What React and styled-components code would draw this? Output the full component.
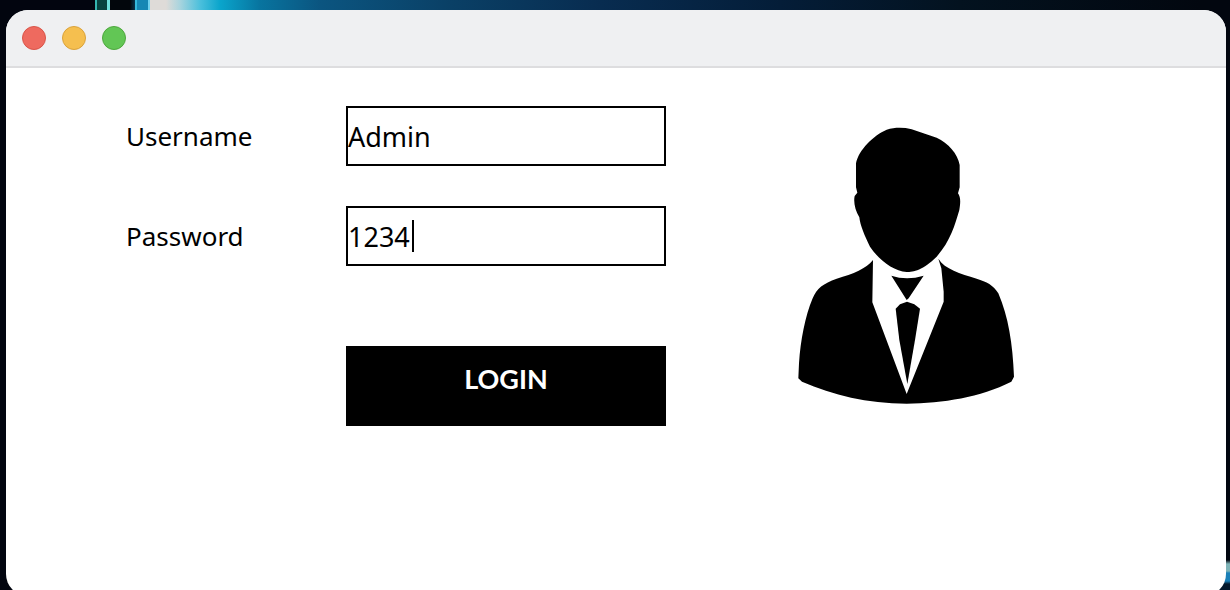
import React, { useState } from 'react';
import styled, { createGlobalStyle } from 'styled-components';

const GlobalStyle = createGlobalStyle`
  * { box-sizing: border-box; }
  body { margin: 0; background: #02060f; }
`;

const Desktop = styled.div`
  display: flex;
  height: 100vh;
  overflow: hidden;
  padding: 10px 4px 0 6px;
  background:
    linear-gradient(180deg, #02060f 0 560px, #7fb4b8 564px 571px, #1b80b8 573px 581px, #04182c 584px) right top / 20px 100% no-repeat,
    linear-gradient(90deg,
      #02050f 0 95px, #35b5b0 95px 97px, #06433f 97px 107px, #6fe0dc 107px 110px,
      #02060c 110px 130px, #08324a 135px, #35b8dc 135px 137px, #1687b4 137px 148px,
      #6fd0ee 148px 150px, #dedbd8 150px 166px, #a8d4de 180px, #4cc0dc 200px, #0aa5cc 220px,
      #08749f 260px, #0b5580 320px, #0a4066 450px, #082c50 600px, #041d38 780px, #03121f 960px, #02070f 1200px);
`;

const Window = styled.main`
  flex: 1;
  display: flex;
  flex-direction: column;
  margin-bottom: -6px;
  overflow: hidden;
  border-radius: 22px;
  background: #fff;
`;

const TitleBar = styled.header`
  display: flex;
  align-items: center;
  gap: 16px;
  height: 58px;
  padding: 0 16px;
  background: #eff0f2;
  border-bottom: 2px solid #dddddf;
`;

const WindowButton = styled.button`
  width: 24px;
  height: 24px;
  padding: 0;
  border: 1px solid ${(p) => p.$edge};
  border-radius: 50%;
  background: ${(p) => p.$fill};
`;

const Content = styled.div`
  display: flex;
  align-items: flex-start;
  gap: 132px;
  padding: 38px 120px;
`;

const LoginForm = styled.form`
  display: grid;
  grid-template-columns: 220px 320px;
  row-gap: 40px;
  align-items: center;
  font-family: "Noto Sans", sans-serif;
  font-size: 26px;
  color: #000;
`;

const Field = styled.div`
  position: relative;
`;

const TextInput = styled.input`
  display: block;
  width: 100%;
  height: 60px;
  padding: 0;
  border: 2px solid #000;
  border-radius: 0;
  outline: none;
  background: #fff;
  color: #000;
  font: inherit;
  font-size: 27px;
`;

const Caret = styled.span`
  position: absolute;
  top: 14px;
  left: 66px;
  width: 2px;
  height: 32px;
  background: #000;
`;

const LoginButton = styled.button`
  grid-column: 2;
  height: 80px;
  margin-top: 40px;
  padding: 0 0 16px;
  border: 0;
  background: #000;
  color: #fff;
  font-family: Lato, sans-serif;
  font-size: 27px;
  font-weight: 700;
`;

const Portrait = styled.svg`
  flex: none;
  width: 216px;
  height: 278px;
  margin-top: 20px;
`;

export default function App() {
  const [username, setUsername] = useState('Admin');
  const [password, setPassword] = useState('1234');

  return (
    <>
      <GlobalStyle />
      <Desktop>
        <Window>
          <TitleBar>
            <WindowButton type="button" aria-label="Close" $fill="#ee6a5f" $edge="#d85549" />
            <WindowButton type="button" aria-label="Minimize" $fill="#f5bf4f" $edge="#d9a23c" />
            <WindowButton type="button" aria-label="Zoom" $fill="#62c655" $edge="#4ea73e" />
          </TitleBar>
          <Content>
            <LoginForm onSubmit={(e) => e.preventDefault()}>
              <label htmlFor="username">Username</label>
              <Field>
                <TextInput id="username" value={username} onChange={(e) => setUsername(e.target.value)} />
              </Field>
              <label htmlFor="password">Password</label>
              <Field>
                <TextInput id="password" value={password} onChange={(e) => setPassword(e.target.value)} />
                <Caret />
              </Field>
              <LoginButton type="submit">LOGIN</LoginButton>
            </LoginForm>
            <Portrait viewBox="24 48 648 834" role="img" aria-label="User">
              <path d="M198 160C206 120 250 76 290 59C315 52 340 52 365 58L440 83C475 100 503 130 509 165V232L504 250C512 262 512 275 508 300C495 345 480 395 440 440C400 480 370 486 350 486C310 484 265 448 240 410C225 380 210 345 208 322C195 300 190 275 194 258L202 248L198 232Z" />
              <path d="M249 450C230 475 190 492 140 506C100 520 80 535 68 565C45 620 32 690 27 760L25 805L36 815C130 855 230 880 350 881C460 879 570 862 664 815L672 800C668 700 655 620 625 550C610 525 590 515 560 506C510 490 465 478 445 446L454 475L461 545V575L350 852L247 577Z" />
              <path d="M304 497Q350 512 401 497L356 565L350 570Z" />
              <path d="M351 575L373 583L390 596L375 690L352 822L328 690L317 596L330 583Z" />
            </Portrait>
          </Content>
        </Window>
      </Desktop>
    </>
  );
}
